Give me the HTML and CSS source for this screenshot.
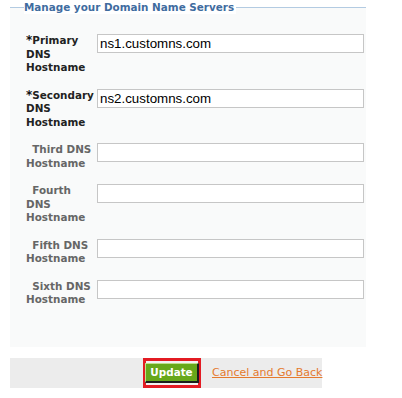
FILE: index.html
```html
<!doctype html>
<html lang="en">
<head>
  <title>Manage your Domain Name Servers</title>
  <link rel="stylesheet" href="styles.css">
</head>
<body>
  <form class="dns-form" action="#" onsubmit="return false;">
    <fieldset class="dns-box">
      <legend>Manage your Domain Name Servers</legend>
      <div class="dns-grid">
        <label class="dns-label required" for="ns1"><span class="req">*</span>Primary DNS Hostname</label>
        <input class="dns-input" type="text" id="ns1" value="ns1.customns.com">
        <label class="dns-label required" for="ns2"><span class="req">*</span>Secondary DNS Hostname</label>
        <input class="dns-input" type="text" id="ns2" value="ns2.customns.com">
        <label class="dns-label" for="ns3"><span class="req">*</span>Third DNS Hostname</label>
        <input class="dns-input" type="text" id="ns3">
        <label class="dns-label" for="ns4"><span class="req">*</span>Fourth DNS Hostname</label>
        <input class="dns-input" type="text" id="ns4">
        <label class="dns-label" for="ns5"><span class="req">*</span>Fifth DNS Hostname</label>
        <input class="dns-input" type="text" id="ns5">
        <label class="dns-label" for="ns6"><span class="req">*</span>Sixth DNS Hostname</label>
        <input class="dns-input" type="text" id="ns6">
      </div>
    </fieldset>
    <div class="dns-actions">
      <span class="highlight">
        <button class="btn-update" type="submit">Update</button>
      </span>
      <a class="cancel-link" href="#">Cancel and Go Back</a>
    </div>
  </form>
</body>
</html>
```

FILE: styles.css
```css
html, body {
  margin: 0;
  padding: 0;
  background: #fff;
}
.dns-form {
  margin: 0;
  font-family: "DejaVu Sans", Verdana, sans-serif;
  font-size: 10.4px;
}
.dns-box {
  margin: 0 0 0 10px;
  width: 356px;
  box-sizing: border-box;
  min-width: 0;
  padding: 20px 0 40px 16px;
  border: none;
  border-top: 1px solid #b3cbe2;
  background: #f9fafa;
}
.dns-box legend {
  margin-left: -2px;
  padding: 0 2px 0 0;
  font-weight: bold;
  font-size: 10.4px;
  line-height: 14px;
  color: #3f6c9f;
  background: #fff;
}
.dns-grid {
  display: grid;
  grid-template-columns: 69px 267px;
  column-gap: 2px;
  row-gap: 14px;
  align-items: start;
}
.dns-label {
  font-weight: bold;
  line-height: 13.5px;
  color: #666;
}
.dns-label.required {
  color: #222;
}
.req {
  font-size: 12px;
  color: #111;
  visibility: hidden;
}
.required .req {
  visibility: visible;
}
.dns-input {
  box-sizing: border-box;
  width: 267px;
  height: 19px;
  margin: 0;
  padding: 0 2px;
  border: 1px solid #c6c6c6;
  background: #fff;
  font-family: "Liberation Sans", Arial, sans-serif;
  font-size: 13.33px;
  color: #000;
  outline: none;
}
.dns-actions {
  display: flex;
  align-items: center;
  gap: 11px;
  width: fit-content;
  margin: 11px 0 0 10px;
  padding-left: 133px;
  background: #ececec;
}
.highlight {
  display: flex;
  align-items: center;
  justify-content: center;
  width: 58px;
  height: 30px;
  box-sizing: border-box;
  border: 3px solid #e31b23;
  background: #f2f2f2;
}
.btn-update {
  display: block;
  height: 20px;
  margin: 0;
  padding: 0 4px;
  border-style: solid;
  border-width: 1px 2px 2px 1px;
  border-color: #bfe08a #1c1c1c #1c1c1c #bfe08a;
  background: #67a81a;
  color: #fff;
  font-family: "DejaVu Sans", Verdana, sans-serif;
  font-size: 10.4px;
  font-weight: bold;
  line-height: 17px;
}
.cancel-link {
  color: #e57a2e;
  text-decoration: underline;
  font-size: 11px;
  white-space: nowrap;
}
```
